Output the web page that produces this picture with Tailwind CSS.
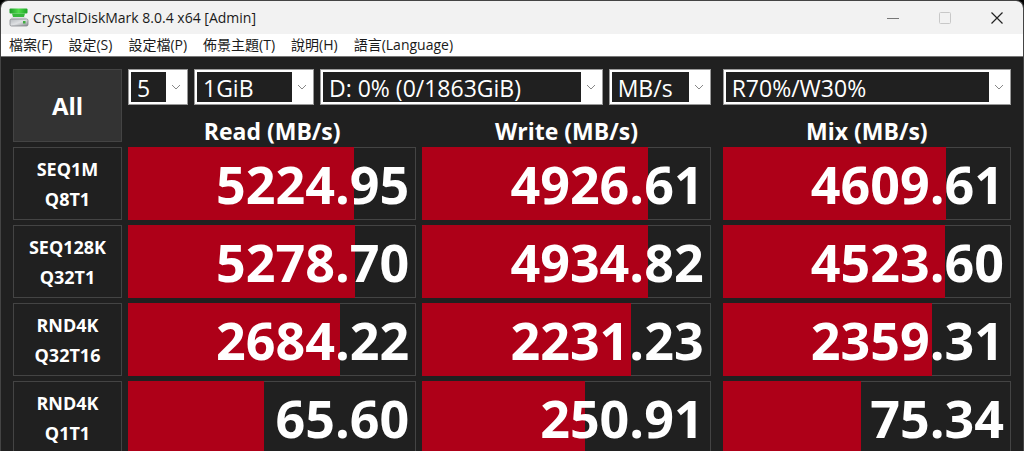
<!-- CrystalDiskMark main window -->
<!DOCTYPE html>
<html lang="zh-Hant">
<head>
    <meta charset="UTF-8">
    <meta name="viewport" content="width=device-width, initial-scale=1.0">
    <title>CrystalDiskMark 8.0.4 x64 [Admin]</title>
    <script src="https://cdn.jsdelivr.net/npm/@tailwindcss/browser@4"></script>
</head>
<body class="h-screen overflow-hidden bg-black font-['Open_Sans','Noto_Sans_CJK_TC',sans-serif] text-white">
    <div class="min-h-screen rounded-t-lg border border-b-0 border-[#444] bg-[#202020] overflow-hidden">

        <!-- Title bar -->
        <header class="flex h-[33px] items-center bg-[#f2f2f2] pl-2 text-[#1a1a1a]">
            <svg class="size-5 shrink-0" viewBox="0 0 20 20" aria-hidden="true">
                <defs>
                    <linearGradient id="green" x1="0" y1="0" x2="1" y2="0">
                        <stop offset="0" stop-color="#1c9a28"/>
                        <stop offset="0.5" stop-color="#4fdc4a"/>
                        <stop offset="1" stop-color="#1da526"/>
                    </linearGradient>
                    <linearGradient id="silver" x1="0" y1="0" x2="1" y2="1">
                        <stop offset="0" stop-color="#b4b8bc"/>
                        <stop offset="0.5" stop-color="#dfe1e3"/>
                        <stop offset="1" stop-color="#85898d"/>
                    </linearGradient>
                </defs>
                <path d="M3 9h13l3 3H1z" fill="#dcdfe2"/>
                <rect x="0.5" y="0.5" width="18" height="5" rx="1" fill="url(#green)"/>
                <path d="M3 5.500h13l-1 3.500h-11z" fill="#35b93a"/>
                <rect x="1" y="11" width="18" height="7" rx="1.500" fill="url(#silver)" stroke="#85898d" stroke-width="0.8"/>
                <rect x="14" y="13" width="2.500" height="2.500" fill="#3fae3f"/>
            </svg>
            <h1 class="ml-1 text-sm">CrystalDiskMark 8.0.4 x64 [Admin]</h1>
            <div class="ml-auto flex h-full">
                <button aria-label="Minimize" class="flex w-13 items-center justify-center">
                    <svg class="size-3" viewBox="0 0 12 12" fill="none" stroke="#777"><path d="M0 6.500h12"/></svg>
                </button>
                <button aria-label="Maximize" disabled class="flex w-13 items-center justify-center">
                    <svg class="size-3" viewBox="0 0 12 12" fill="none" stroke="#c8c8c8"><rect x="0.5" y="0.5" width="11" height="11" rx="1"/></svg>
                </button>
                <button aria-label="Close" class="flex w-13 items-center justify-center">
                    <svg class="size-3" viewBox="0 0 12 12" fill="none" stroke="#222" stroke-width="1.2"><path d="M0.500 0.500l11 11M11.500 0.500l-11 11"/></svg>
                </button>
            </div>
        </header>

        <!-- Menu -->
        <nav class="flex h-[23px] items-center gap-4 border-b border-[#777] bg-white pl-2 text-sm text-[#1a1a1a]">
            <button>檔案(F)</button>
            <button>設定(S)</button>
            <button>設定檔(P)</button>
            <button>佈景主題(T)</button>
            <button>說明(H)</button>
            <button>語言(Language)</button>
        </nav>

        <main class="px-3 pt-3">
            <table class="grid grid-cols-[109px_minmax(0,1fr)_minmax(0,1fr)_0px_minmax(0,1fr)] gap-x-1.5">
                <thead class="contents">
                    <tr class="contents">
                        <td rowspan="2" class="row-span-2 flex p-0 pb-[5px]">
                            <button class="w-full border border-[#444] bg-[#333] text-2xl font-bold">All</button>
                        </td>
                        <td colspan="2" class="col-span-2 flex gap-1.5 p-0">
                            <label class="flex h-9 w-15 border border-[#999] bg-white p-0.5">
                                <select aria-label="Test count" class="min-w-0 flex-1 appearance-none bg-[#202020] pl-1.5 text-[23px] leading-8">
                                    <option>5</option>
                                </select>
                                <svg class="h-full w-[19px] shrink-0" viewBox="0 0 19 30" fill="none" stroke="#888"><path d="M6 13l4 4l4-4"/></svg>
                            </label>
                            <label class="flex h-9 w-30 border border-[#999] bg-white p-0.5">
                                <select aria-label="Test size" class="min-w-0 flex-1 appearance-none bg-[#202020] pl-1.5 text-[23px] leading-8">
                                    <option>1GiB</option>
                                </select>
                                <svg class="h-full w-[19px] shrink-0" viewBox="0 0 19 30" fill="none" stroke="#888"><path d="M6 13l4 4l4-4"/></svg>
                            </label>
                            <label class="flex h-9 min-w-0 flex-1 border border-[#999] bg-white p-0.5">
                                <select aria-label="Drive" class="min-w-0 flex-1 appearance-none bg-[#202020] pl-1.5 text-[23px] leading-8">
                                    <option>D: 0% (0/1863GiB)</option>
                                </select>
                                <svg class="h-full w-[19px] shrink-0" viewBox="0 0 19 30" fill="none" stroke="#888"><path d="M6 13l4 4l4-4"/></svg>
                            </label>
                            <label class="flex h-9 w-[102px] border border-[#999] bg-white p-0.5">
                                <select aria-label="Unit" class="min-w-0 flex-1 appearance-none bg-[#202020] pl-1.5 text-[23px] leading-8">
                                    <option>MB/s</option>
                                </select>
                                <svg class="h-full w-[19px] shrink-0" viewBox="0 0 19 30" fill="none" stroke="#888"><path d="M6 13l4 4l4-4"/></svg>
                            </label>
                        </td>
                        <td class="col-start-5 p-0">
                            <label class="flex h-9 border border-[#999] bg-white p-0.5">
                                <select aria-label="Mix ratio" class="min-w-0 flex-1 appearance-none bg-[#202020] pl-1.5 text-[23px] leading-8">
                                    <option>R70%/W30%</option>
                                </select>
                                <svg class="h-full w-[19px] shrink-0" viewBox="0 0 19 30" fill="none" stroke="#888"><path d="M6 13l4 4l4-4"/></svg>
                            </label>
                        </td>
                    </tr>
                    <tr class="contents">
                        <th scope="col" class="p-0 pt-2.5 text-[23px] leading-8 font-bold">Read (MB/s)</th>
                        <th scope="col" class="p-0 pt-2.5 text-[23px] leading-8 font-bold">Write (MB/s)</th>
                        <th scope="col" class="col-start-5 p-0 pt-2.5 text-[23px] leading-8 font-bold">Mix (MB/s)</th>
                    </tr>
                </thead>
                <tbody id="results" class="contents"></tbody>
            </table>
        </main>
    </div>

    <script>
        // value in MB/s, bar length in percent
        const results = [
            { test: 'SEQ1M', queue: 'Q8T1', cells: [['5224.95', 79], ['4926.61', 78.7], ['4609.61', 78]] },
            { test: 'SEQ128K', queue: 'Q32T1', cells: [['5278.70', 79.2], ['4934.82', 78.8], ['4523.60', 77.8]] },
            { test: 'RND4K', queue: 'Q32T16', cells: [['2684.22', 74.2], ['2231.23', 73], ['2359.31', 73.1]] },
            { test: 'RND4K', queue: 'Q1T1', cells: [['65.60', 47.4], ['250.91', 56.9], ['75.34', 48.4]] }
        ];

        document.getElementById('results').innerHTML = results.map(row => `
            <tr class="contents">
                <th scope="row" class="mb-[5px] flex p-0">
                    <button class="w-full border border-[#444] text-lg leading-[30px] font-bold">${row.test}<br>${row.queue}</button>
                </th>
                ${row.cells.map(([value, percent], i) => `
                    <td class="relative mb-[5px] h-[73px] border border-[#444] p-0 pt-1.5 pr-1.5 text-right text-[52px] leading-[60px] font-bold ${i === 2 ? 'col-start-5' : ''}">
                        <div class="absolute -inset-y-px -left-px bg-[#ae0018]" style="width: ${percent}%"></div>
                        <span class="relative">${value}</span>
                    </td>`).join('')}
            </tr>`).join('');
    </script>
</body>
</html>
